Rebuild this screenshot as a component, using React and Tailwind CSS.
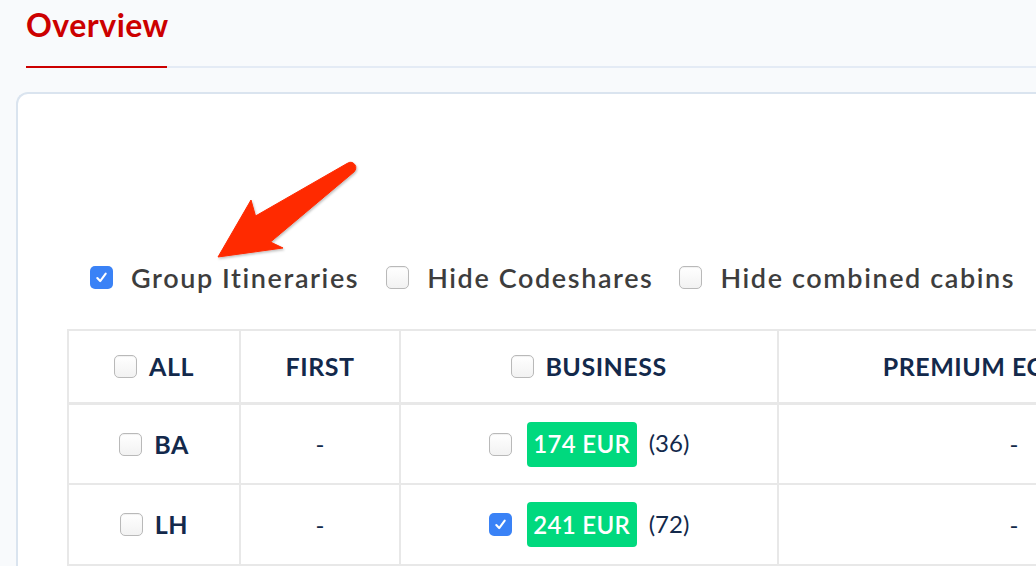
import React from "react";

const font = { fontFamily: "Lato, 'Noto Sans', sans-serif" };

function Box({ checked }) {
  if (checked) {
    return (
      <div className="w-[23px] h-[23px] shrink-0 rounded-[5px] bg-[#3a82f6] flex items-center justify-center">
        <svg width="15" height="15" viewBox="0 0 16 16" fill="none">
          <path d="M3.5 8.5 L6.6 11.8 L12.5 3.8" stroke="white" strokeWidth="2.2" strokeLinecap="round" strokeLinejoin="round" />
        </svg>
      </div>
    );
  }
  return (
    <div className="w-[23px] h-[23px] shrink-0 rounded-[5px] border border-[#b9b9b9] bg-gradient-to-b from-white to-[#f2f2f2] shadow-[inset_0_1px_1px_rgba(0,0,0,0.06)]" />
  );
}

function Option({ checked, label }) {
  return (
    <div className="flex items-center gap-[18px]">
      <Box checked={checked} />
      <span className="text-[27px] font-semibold tracking-[1.6px] text-[#3d3d3d] leading-none">{label}</span>
    </div>
  );
}

const headCell = "border-r-2 border-b-[3px] border-[#e8e8e8] h-[74px] flex items-center justify-center shrink-0";
const bodyCell = "border-r-2 border-b-2 border-[#e8e8e8] flex items-center justify-center shrink-0";
const headText = "text-[25px] font-bold tracking-[0.5px] text-[#13294b] leading-none uppercase";

function Price({ checked, price, count }) {
  return (
    <div className="flex items-center">
      <Box checked={checked} />
      <span className="ml-[15px] bg-[#00d97e] rounded-[4px] h-[45px] w-[110px] flex items-center justify-center text-white text-[24px] tracking-[0.3px] font-semibold leading-none">
        {price}
      </span>
      <span className="ml-[12px] text-[24px] text-[#13294b] leading-none -mt-[2px]">{count}</span>
    </div>
  );
}

export default function App() {
  const rows = [
    { code: "BA", price: "174 EUR", count: "(36)", checked: false, h: "h-[80px]" },
    { code: "LH", price: "241 EUR", count: "(72)", checked: true, h: "h-[81px]" },
  ];
  return (
    <div className="relative w-[1036px] h-[566px] overflow-hidden bg-[#f8fafc]" style={font}>
      <div className="ml-[26px] border-b-2 border-[#e4ebf5] flex">
        <div className="-mb-[2px] border-b-2 border-[#cc0000] w-[141px] pt-[5px] pb-[21px]">
          <div className="text-[32px] tracking-[0.5px] leading-[40px] font-bold text-[#cc0000] whitespace-nowrap">Overview</div>
        </div>
      </div>

      <div className="ml-[16px] mt-[24px] w-[1100px] h-[600px] bg-white border-l-2 border-t-2 border-[#dae4ef] rounded-tl-[12px] pl-[49px]">
        <div className="ml-[23px] mt-[168px] h-[30px] flex items-center whitespace-nowrap">
          <Option checked label="Group Itineraries" />
          <div className="w-[27px] shrink-0" />
          <Option label="Hide Codeshares" />
          <div className="w-[26px] shrink-0" />
          <Option label="Hide combined cabins" />
        </div>

        <div className="mt-[37px] border-l-2 border-t-2 border-[#e8e8e8] w-[1300px]">
          <div className="flex">
            <div className={`${headCell} w-[172px]`}>
              <Box />
              <span className={`${headText} ml-[12px]`}>All</span>
            </div>
            <div className={`${headCell} w-[160px]`}>
              <span className={headText}>First</span>
            </div>
            <div className={`${headCell} w-[378px]`}>
              <Box />
              <span className={`${headText} ml-[11px]`}>Business</span>
            </div>
            <div className={`${headCell} w-[472px]`}>
              <span className={`${headText} whitespace-nowrap`}>Premium Economy</span>
            </div>
            <div className={`${headCell} w-[200px]`}>
              <span className={headText}>Economy</span>
            </div>
          </div>
          {rows.map((r) => (
            <div className="flex" key={r.code}>
              <div className={`${bodyCell} ${r.h} w-[172px]`}>
                <Box />
                <span className={`${headText} ml-[12px]`}>{r.code}</span>
              </div>
              <div className={`${bodyCell} ${r.h} w-[160px]`}>
                <span className="text-[24px] text-[#13294b] leading-none">-</span>
              </div>
              <div className={`${bodyCell} ${r.h} w-[378px]`}>
                <Price checked={r.checked} price={r.price} count={r.count} />
              </div>
              <div className={`${bodyCell} ${r.h} w-[472px]`}>
                <span className="text-[24px] text-[#13294b] leading-none">-</span>
              </div>
              <div className={`${bodyCell} ${r.h} w-[200px]`}>
                <span className="text-[24px] text-[#13294b] leading-none">-</span>
              </div>
            </div>
          ))}
        </div>
      </div>

      <svg className="absolute left-0 top-0 pointer-events-none" width="1036" height="566" viewBox="0 0 1036 566">
        <defs>
          <filter id="sh" x="-20%" y="-20%" width="140%" height="140%">
            <feDropShadow dx="1" dy="1.5" stdDeviation="1.2" floodColor="#000" floodOpacity="0.25" />
          </filter>
        </defs>
        <path
          d="M347 163.5 L255.5 216 L251 200 L218 257 L283 248 L270.5 242 L354.5 171.5 Q358 166 352.5 162.5 Q350 161.5 347 163.5 Z"
          fill="#ff2a00"
          stroke="#ff2a00"
          strokeWidth="1"
          strokeLinejoin="round"
          filter="url(#sh)"
        />
      </svg>
    </div>
  );
}
